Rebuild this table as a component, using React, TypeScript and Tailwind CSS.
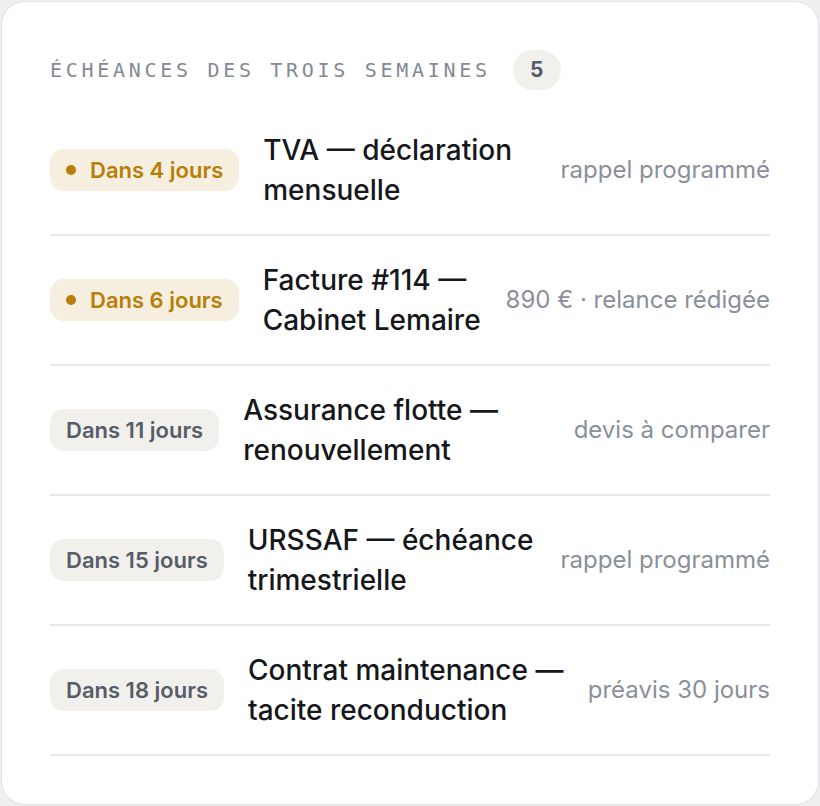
const rows = [
	{ days: 'Dans 4 jours', soon: true, title: 'TVA — déclaration mensuelle', meta: 'rappel programmé' },
	{ days: 'Dans 6 jours', soon: true, title: 'Facture #114 — Cabinet Lemaire', meta: '890 € · relance rédigée' },
	{ days: 'Dans 11 jours', soon: false, title: 'Assurance flotte — renouvellement', meta: 'devis à comparer' },
	{ days: 'Dans 15 jours', soon: false, title: 'URSSAF — échéance trimestrielle', meta: 'rappel programmé' },
	{ days: 'Dans 18 jours', soon: false, title: 'Contrat maintenance — tacite reconduction', meta: 'préavis 30 jours' },
];

export default function App() {
	return (
		<div className="min-h-screen bg-[#efeff1] p-px font-['Inter','Noto_Sans',sans-serif]">
			<div className="rounded-[24px] border border-[#e2e2e7] bg-white px-12 pt-[48px] pb-[48px]">
				<div className="flex items-center gap-[22px]">
					<span className="font-['DejaVu_Sans_Mono','Liberation_Mono',monospace] text-[20px] uppercase tracking-[0.185em] text-[#838995]">
						Échéances des trois semaines
					</span>
					<span className="flex h-10 w-12 items-center justify-center rounded-full bg-[#f1f0ed] text-[21px] font-bold text-[#555b66]">
						5
					</span>
				</div>

				<ul className="mt-4">
					{rows.map((r) => (
						<li
							key={r.days}
							className="flex items-center border-b-2 border-[#e8e8eb] py-6">
							{r.soon ? (
								<span className="mr-6 flex h-[42px] shrink-0 items-center gap-[14px] rounded-[14px] bg-[#f6eedf] pl-4 pr-4 text-[22px] font-semibold text-[#b97e07]">
									<span className="h-[10px] w-[10px] rounded-full bg-[#b97e07]" />
									{r.days}
								</span>
							) : (
								<span className="mr-6 flex h-[42px] shrink-0 items-center rounded-[14px] bg-[#f1f0ed] px-4 text-[22px] font-semibold text-[#575d68]">
									{r.days}
								</span>
							)}
							<span className="min-w-0 flex-1 text-[28px] font-medium leading-[40px] text-[#15171b]">
								{r.title}
							</span>
							<span className="ml-5 shrink-0 whitespace-nowrap text-[24px] text-[#8a8f99]">
								{r.meta}
							</span>
						</li>
					))}
				</ul>
			</div>
		</div>
	);
}
